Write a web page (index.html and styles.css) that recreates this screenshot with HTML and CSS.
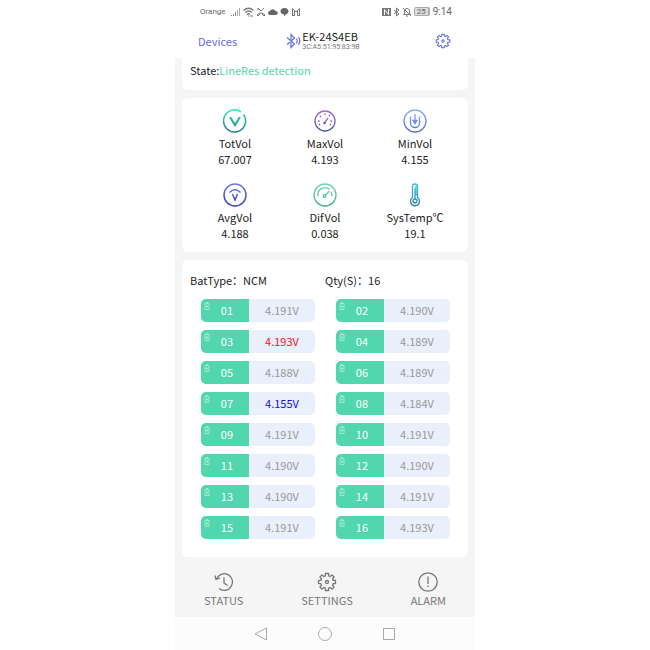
FILE: index.html
```html
<!DOCTYPE html>
<html lang="en">
<head>
    <meta charset="UTF-8">
    <meta name="viewport" content="width=device-width, initial-scale=1.0">
    <title>EK-24S4EB</title>
    <link rel="stylesheet" href="styles.css">
</head>
<body>
<div class="phone">
    <div class="status-bar">
        <span class="carrier">Orange</span>
        <div class="status-icons">
            <svg width="10" height="10" viewBox="0 0 10 10" fill="#888"><path d="M0 8h1v1H0zM2 7h1v2H2zM4 5h1v4H4z"/><path d="M6 3h1v6H6zM8 1h1v8H8z" fill="#aaa"/></svg>
            <svg width="11" height="10" viewBox="0 0 11 10" fill="none" stroke="#777" stroke-width="1.200"><path d="M.5 3.500q5-4.500 10 0M2.200 5.500q3.300-3 6.600 0M4 7.500q1.500-1.500 3 0"/><path d="M7 9h3M5 9h1"/></svg>
            <svg width="10" height="10" viewBox="0 0 10 10" fill="none" stroke="#777"><path d="M2 1l3 3 3-3M2 1v2M1 8q4-4 8 0M1 8l1 1 2-2M9 8L8 9 6 7"/></svg>
            <svg width="10" height="10" viewBox="0 0 10 10" fill="#666"><path d="M2 8a2 2 0 0 1 0-4 3 3 0 0 1 5.500 0A2 2 0 0 1 8 8z"/></svg>
            <svg width="9" height="10" viewBox="0 0 9 10" fill="#666"><path d="M4.500 1C7 1 8.500 2.300 8.500 4.200S7 7 6 7.200L4 9.500V7.300C2 7.200.5 6 .5 4.200S2 1 4.500 1z"/></svg>
            <svg width="10" height="10" viewBox="0 0 10 10" fill="none" stroke="#777"><path d="M1.500 8.500v-7L5 5l3.500-3.500v7M1 8.500h2.500V4M9 8.500H6.500V4"/></svg>
        </div>
        <div class="status-icons status-right">
            <svg width="9" height="10" viewBox="0 0 9 10"><path d="M0 1h9v8H0z" fill="#777"/><path d="M2.500 8V2.500l4 5V2" fill="none" stroke="#fff"/></svg>
            <svg width="7" height="10" viewBox="0 0 7 10" fill="none" stroke="#777"><path d="M1 3l5 4-2.500 2V1L6 3 1 7"/></svg>
            <svg width="10" height="10" viewBox="0 0 10 10" fill="none" stroke="#777"><path d="M1.500 7.500h7L7.500 6V4a2.500 2.500 0 0 0-5 0v2zM4 9h2M1 1l8 8"/></svg>
            <span class="battery">25</span>
            <span class="time">9:14</span>
        </div>
    </div>

    <header class="header">
        <a class="devices" href="#">Devices</a>
        <div class="device">
            <svg width="15" height="16" viewBox="0 0 15 16" fill="none" stroke="#6670e0" stroke-width="1.200"><path d="M1 4.500l7.500 6.500L5 14.500v-13L8.500 5 1 11.500M10.500 5.500q1.300 2.500 0 5M12.500 4q2.500 4 0 8"/></svg>
            <div>
                <h1 class="device-name">EK-24S4EB</h1>
                <div class="device-mac">3C:A5:51:95:83:9B</div>
            </div>
        </div>
        <button class="icon-button" aria-label="Settings">
            <svg width="16" height="16" viewBox="0 0 20 20" fill="none" stroke="#5f6ae0" stroke-width="1.300" stroke-linejoin="round"><use href="#gear"/></svg>
        </button>
    </header>

    <main class="content">
        <section class="card state">State:<span class="state-value">LineRes detection</span></section>

        <section class="card stats">
            <div class="stat">
                <svg width="24" height="24" viewBox="0 0 24 24" fill="none" stroke="url(#teal)" stroke-width="1.500"><path d="M20.500 5.500a11 11 0 1 1-2.500-2.500M22 8l-1-2"/><path d="M7 8l5 8 5-8" stroke-width="2"/></svg>
                <span>TotVol</span><span>67.007</span>
            </div>
            <div class="stat">
                <svg width="24" height="24" viewBox="0 0 24 24" fill="none" stroke="url(#purple)" stroke-width="1.300"><circle cx="12" cy="12" r="10"/><path d="M11.500 14l3.500-5M5 12h1.500M17.500 12H19M7 7l1 1M12 4.500V6M16 7l1-1M6 16l1-1M18 16l-1-1"/><circle cx="11.500" cy="14" r=".7"/></svg>
                <span>MaxVol</span><span>4.193</span>
            </div>
            <div class="stat">
                <svg width="24" height="24" viewBox="0 0 24 24" fill="none" stroke="url(#blue)" stroke-width="1.300"><circle cx="12" cy="12" r="11"/><path d="M7.500 7.500V14a4.500 4.500 0 0 0 9 0V7.500M12 5v8M10 11.500l2 3 2-3z"/></svg>
                <span>MinVol</span><span>4.155</span>
            </div>
            <div class="stat">
                <svg width="24" height="24" viewBox="0 0 24 24" fill="none" stroke="url(#indigo)" stroke-width="1.500"><circle cx="12" cy="12" r="11"/><path d="M6.500 9.500q5.500-5.500 11 0M9.500 11l2.500 6 2.500-6"/></svg>
                <span>AvgVol</span><span>4.188</span>
            </div>
            <div class="stat">
                <svg width="24" height="24" viewBox="0 0 24 24" fill="none" stroke="url(#green)" stroke-width="1.300"><circle cx="12" cy="12" r="11"/><path d="M5 13a7 7 0 0 1 11.500-6.500M18 9a7 7 0 0 1 1 4M12.500 12l4-4"/><circle cx="11.500" cy="13" r="1.300"/></svg>
                <span>DifVol</span><span>0.038</span>
            </div>
            <div class="stat">
                <svg width="24" height="24" viewBox="0 0 24 24" fill="none" stroke="url(#cyan)" stroke-width="1.300"><path d="M9.500 14.500V3.500a2.500 2.500 0 0 1 5 0v11a4.500 4.500 0 1 1-5 0z"/><path d="M12 5v11M12 4h2M12 6.500h2M12 9h2M12 11.500h2"/><circle cx="12" cy="18" r="2"/></svg>
                <span>SysTemp℃</span><span>19.1</span>
            </div>
        </section>

        <section class="card pack">
            <div class="pack-info"><span>BatType：NCM</span><span>Qty(S)：16</span></div>
            <div class="cells">
                <div class="cell"><span class="cell-no"><svg class="cell-icon" viewBox="0 0 6 8"><use href="#bat"/></svg>01</span><span class="cell-vol">4.191V</span></div>
                <div class="cell"><span class="cell-no"><svg class="cell-icon" viewBox="0 0 6 8"><use href="#bat"/></svg>02</span><span class="cell-vol">4.190V</span></div>
                <div class="cell"><span class="cell-no"><svg class="cell-icon" viewBox="0 0 6 8"><use href="#bat"/></svg>03</span><span class="cell-vol max">4.193V</span></div>
                <div class="cell"><span class="cell-no"><svg class="cell-icon" viewBox="0 0 6 8"><use href="#bat"/></svg>04</span><span class="cell-vol">4.189V</span></div>
                <div class="cell"><span class="cell-no"><svg class="cell-icon" viewBox="0 0 6 8"><use href="#bat"/></svg>05</span><span class="cell-vol">4.188V</span></div>
                <div class="cell"><span class="cell-no"><svg class="cell-icon" viewBox="0 0 6 8"><use href="#bat"/></svg>06</span><span class="cell-vol">4.189V</span></div>
                <div class="cell"><span class="cell-no"><svg class="cell-icon" viewBox="0 0 6 8"><use href="#bat"/></svg>07</span><span class="cell-vol min">4.155V</span></div>
                <div class="cell"><span class="cell-no"><svg class="cell-icon" viewBox="0 0 6 8"><use href="#bat"/></svg>08</span><span class="cell-vol">4.184V</span></div>
                <div class="cell"><span class="cell-no"><svg class="cell-icon" viewBox="0 0 6 8"><use href="#bat"/></svg>09</span><span class="cell-vol">4.191V</span></div>
                <div class="cell"><span class="cell-no"><svg class="cell-icon" viewBox="0 0 6 8"><use href="#bat"/></svg>10</span><span class="cell-vol">4.191V</span></div>
                <div class="cell"><span class="cell-no"><svg class="cell-icon" viewBox="0 0 6 8"><use href="#bat"/></svg>11</span><span class="cell-vol">4.190V</span></div>
                <div class="cell"><span class="cell-no"><svg class="cell-icon" viewBox="0 0 6 8"><use href="#bat"/></svg>12</span><span class="cell-vol">4.190V</span></div>
                <div class="cell"><span class="cell-no"><svg class="cell-icon" viewBox="0 0 6 8"><use href="#bat"/></svg>13</span><span class="cell-vol">4.190V</span></div>
                <div class="cell"><span class="cell-no"><svg class="cell-icon" viewBox="0 0 6 8"><use href="#bat"/></svg>14</span><span class="cell-vol">4.191V</span></div>
                <div class="cell"><span class="cell-no"><svg class="cell-icon" viewBox="0 0 6 8"><use href="#bat"/></svg>15</span><span class="cell-vol">4.191V</span></div>
                <div class="cell"><span class="cell-no"><svg class="cell-icon" viewBox="0 0 6 8"><use href="#bat"/></svg>16</span><span class="cell-vol">4.193V</span></div>
            </div>
        </section>
    </main>

    <nav class="tabs">
        <a class="tab" href="#">
            <svg width="20" height="20" viewBox="0 0 20 20" fill="none" stroke="#777" stroke-width="1.300"><path d="M2.500 7A8.300 8.300 0 1 1 5 16.500M1 3.500L2 7.500l4-1.500M10 5.500V11l3.500 2.500"/></svg>
            STATUS
        </a>
        <a class="tab" href="#">
            <svg width="20" height="20" viewBox="0 0 20 20" fill="none" stroke="#777" stroke-width="1.300" stroke-linejoin="round"><use href="#gear"/></svg>
            SETTINGS
        </a>
        <a class="tab" href="#">
            <svg width="20" height="20" viewBox="0 0 20 20" fill="none" stroke="#777" stroke-width="1.300"><circle cx="10" cy="10" r="9.200"/><path d="M10 4.500V12M10 13.500V15"/></svg>
            ALARM
        </a>
    </nav>

    <div class="system-nav">
        <button class="icon-button" aria-label="Back"><svg width="14" height="14" viewBox="0 0 14 14" fill="none" stroke="#aaa"><path d="M12.500 1v12L1 7z" stroke-linejoin="round"/></svg></button>
        <button class="icon-button" aria-label="Home"><svg width="14" height="14" viewBox="0 0 14 14" fill="none" stroke="#aaa"><circle cx="7" cy="7" r="6.500"/></svg></button>
        <button class="icon-button" aria-label="Recent"><svg width="14" height="14" viewBox="0 0 14 14" fill="none" stroke="#aaa"><rect x="1.500" y="1.500" width="11" height="11"/></svg></button>
    </div>
</div>

<!-- shared shapes and gradients -->
<svg class="defs" width="0" height="0" aria-hidden="true">
    <defs>
        <g id="gear">
            <path d="M8.400 1.500h3.200v2.300l1.700.7L15 2.900 17.100 5l-1.600 1.700.7 1.700h2.300v3.200h-2.300l-.7 1.700 1.600 1.700-2.100 2.100-1.700-1.600-1.700.7v2.300H8.400v-2.300l-1.700-.7L5 17.100 2.900 15l1.600-1.700-.7-1.700H1.500V8.400h2.300l.7-1.700L2.900 5 5 2.900l1.700 1.600 1.700-.7z"/>
            <circle cx="10" cy="10" r="1.500"/>
        </g>
        <g id="bat" fill="none" stroke="#b4eeda" stroke-width=".8">
            <path d="M2 .5h2M1 1.500h4v6H1zM3 3v3M2 4.500h2"/>
        </g>
        <linearGradient id="teal" gradientUnits="userSpaceOnUse" x1="0" y1="0" x2="0" y2="24"><stop offset="0" stop-color="#2fe6b8"/><stop offset="1" stop-color="#187a88"/></linearGradient>
        <linearGradient id="purple" gradientUnits="userSpaceOnUse" x1="0" y1="0" x2="0" y2="24"><stop offset="0" stop-color="#b565dd"/><stop offset="1" stop-color="#45558c"/></linearGradient>
        <linearGradient id="blue" gradientUnits="userSpaceOnUse" x1="0" y1="0" x2="0" y2="24"><stop offset="0" stop-color="#94b4f2"/><stop offset="1" stop-color="#5068d8"/></linearGradient>
        <linearGradient id="indigo" gradientUnits="userSpaceOnUse" x1="0" y1="0" x2="0" y2="24"><stop offset="0" stop-color="#7480e2"/><stop offset="1" stop-color="#303cb8"/></linearGradient>
        <linearGradient id="green" gradientUnits="userSpaceOnUse" x1="0" y1="0" x2="0" y2="24"><stop offset="0" stop-color="#72dcb8"/><stop offset="1" stop-color="#3eac88"/></linearGradient>
        <linearGradient id="cyan" gradientUnits="userSpaceOnUse" x1="0" y1="0" x2="0" y2="24"><stop offset="0" stop-color="#3cc4e4"/><stop offset="1" stop-color="#287ca0"/></linearGradient>
    </defs>
</svg>
</body>
</html>
```
FILE: styles.css
```css
:root {
    --green: #52d6ad;
    --accent: #5f6ae0;
    --page: #f5f5f5;
}

* {
    box-sizing: border-box;
}

body {
    margin: 0;
    background: #fff;
    color: #222;
    font-family: 'Noto Sans CJK SC', 'Noto Sans', sans-serif;
    font-size: 11px;
    line-height: 16px;
}

svg {
    display: block;
    flex: none;
}

a {
    text-decoration: none;
}

.phone {
    display: flex;
    flex-direction: column;
    max-width: 300px;
    min-height: 100vh;
    margin: 0 auto;
    background: var(--page);
}

/* Status bar */
.status-bar {
    display: flex;
    align-items: center;
    height: 23px;
    padding: 0 23px 0 25px;
    background: #fff;
    color: #666;
    font-family: Roboto, sans-serif;
}

.carrier {
    font-size: 8px;
}

.status-icons {
    display: flex;
    align-items: center;
    gap: 2px;
    margin-left: 5px;
}

.status-right {
    margin-left: auto;
}

.battery {
    padding: 0 2px;
    border: 1px solid #aaa;
    border-right-width: 2px;
    border-radius: 2px;
    background: #ddd;
    font-size: 8px;
    line-height: 7px;
}

.time {
    margin-left: 1px;
    font-size: 10px;
}

/* Header */
.header {
    display: grid;
    grid-template-columns: 1fr auto 1fr;
    align-items: center;
    height: 35px;
    padding: 0 24px 0 23px;
    background: #fff;
}

.devices {
    color: var(--accent);
}

.device {
    display: flex;
    align-items: center;
    gap: 1px;
    padding-right: 3px;
}

.device-name {
    margin: 0;
    font-size: 11px;
    font-weight: 400;
    line-height: 14px;
}

.device-mac {
    color: #777;
    font-family: Roboto, sans-serif;
    font-size: 7px;
    line-height: 9px;
}

.icon-button {
    justify-self: end;
    padding: 0;
    border: 0;
    background: none;
}

/* Cards */
.content {
    display: flex;
    flex-direction: column;
    gap: 8px;
    padding: 0 7px;
}

.card {
    border-radius: 6px;
    background: #fff;
}

.state {
    padding: 4px 8px 12px;
    border-radius: 0 0 6px 6px;
}

.state-value {
    color: var(--green);
}

.stats {
    display: grid;
    grid-template-columns: repeat(3, 1fr);
    row-gap: 16px;
    padding: 11px 8px;
}

.stat {
    display: flex;
    flex-direction: column;
    align-items: center;
}

.stat svg {
    margin-bottom: 2px;
}

/* Battery cells */
.pack {
    padding: 12px 8px 18px;
}

.pack-info {
    display: grid;
    grid-template-columns: 1fr 1fr;
}

.cells {
    display: grid;
    grid-template-columns: 1fr 1fr;
    gap: 8px 21px;
    padding: 11px 10px 0 11px;
}

.cell {
    display: flex;
    height: 23px;
    border-radius: 5px;
    background: #e9effb;
    line-height: 23px;
    text-align: center;
    overflow: hidden;
}

.cell-no {
    position: relative;
    width: 42%;
    padding-left: 4px;
    background: var(--green);
    color: #fff;
}

.cell-icon {
    position: absolute;
    top: 3px;
    left: 3px;
    width: 6px;
    height: 8px;
}

.cell-vol {
    flex: 1;
    color: #999;
}

.cell-vol.max {
    color: #ff1018;
}

.cell-vol.min {
    color: #1010f0;
}

/* Bottom bars */
.tabs {
    display: flex;
    justify-content: space-between;
    padding: 15px 29px 9px;
}

.tab {
    display: flex;
    flex-direction: column;
    align-items: center;
    color: #777;
}

.system-nav {
    display: flex;
    flex: 1;
    align-items: center;
    justify-content: center;
    gap: 50px;
    min-height: 33px;
    background: #fcfcfc;
}

.defs {
    position: absolute;
}
```
